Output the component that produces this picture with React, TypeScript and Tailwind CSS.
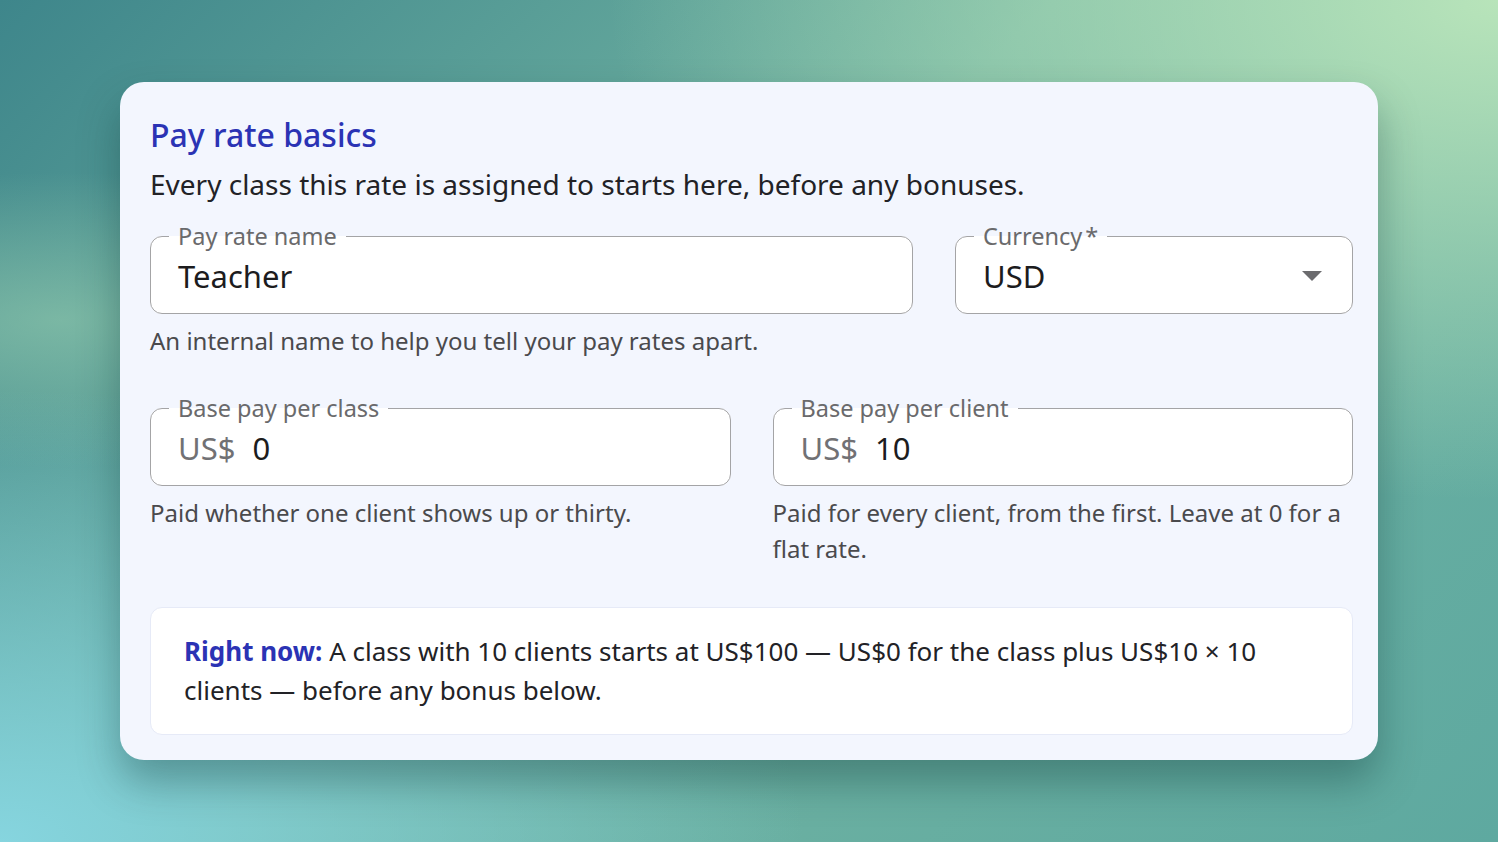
import { ReactNode } from 'react';

// ────────────────────────────────────────────
// Outlined field (notched label, MUI style)
// ────────────────────────────────────────────

function OutlinedField({
  label,
  required,
  children,
  className = '',
}: {
  label: string;
  required?: boolean;
  children: ReactNode;
  className?: string;
}) {
  return (
    <fieldset
      className={`min-w-0 rounded-[12px] border-[1.5px] border-[#a4a4a6] bg-white px-[27px] pb-[19px] ${className}`}
    >
      <legend className="-ml-[9px] px-[9px] text-[23.5px] leading-[23px] text-[#6a6a6c]">
        {label}
        {required && <span className="ml-[3px]">*</span>}
      </legend>
      <div className="mt-[10px] flex h-[36px] items-center text-[31px] leading-[36px] text-[#1c1c1e]">
        {children}
      </div>
    </fieldset>
  );
}

function Helper({ children }: { children: ReactNode }) {
  return <p className="mt-[9px] text-[24px] leading-[36px] text-[#4a4a4d]">{children}</p>;
}

// ────────────────────────────────────────────
// App root
// ────────────────────────────────────────────

export default function App() {
  return (
    <div
      className="flex h-[842px] w-full items-center justify-center overflow-hidden bg-[radial-gradient(ellipse_at_100%_0%,#b8e4ba_0%,rgba(184,228,186,0)_42%),radial-gradient(ellipse_at_0%_100%,#86d5df_0%,rgba(134,213,223,0)_38%),radial-gradient(ellipse_at_4%_38%,rgba(150,205,175,0.6)_0%,rgba(150,205,175,0)_20%),linear-gradient(135deg,#3e868b_0%,#72b4a2_45%,#5ea9a0_100%)]"
      style={{ fontFamily: '"Noto Sans", "Open Sans", sans-serif' }}
    >
      <div className="w-[1258px] rounded-[24px] bg-[#f3f6fe] pb-[25px] pl-[30px] pr-[25px] pt-[33px] shadow-[0_22px_40px_rgba(10,50,50,0.35)]">
        <h1 className="text-[32px] font-medium leading-[40px] text-[#2b33b4]">Pay rate basics</h1>
        <p className="mt-[11px] text-[28px] leading-[36px] text-[#222226]">
          Every class this rate is assigned to starts here, before any bonuses.
        </p>

        <div className="mt-[23px] flex gap-[42px]">
          <OutlinedField label="Pay rate name" className="flex-1">
            Teacher
          </OutlinedField>
          <OutlinedField label="Currency" required className="w-[398px] shrink-0">
            <span className="flex-1">USD</span>
            <svg width="20" height="10" viewBox="0 0 20 10" className="mr-[3px]">
              <path d="M0 0 L20 0 L10 10 Z" fill="#6b6b6e" />
            </svg>
          </OutlinedField>
        </div>
        <Helper>An internal name to help you tell your pay rates apart.</Helper>

        <div className="mt-[38px] grid grid-cols-2 gap-x-[42px]">
          <div>
            <OutlinedField label="Base pay per class">
              <span className="mr-[17px] text-[#717174]">US$</span>0
            </OutlinedField>
            <Helper>Paid whether one client shows up or thirty.</Helper>
          </div>
          <div>
            <OutlinedField label="Base pay per client">
              <span className="mr-[17px] text-[#717174]">US$</span>10
            </OutlinedField>
            <Helper>Paid for every client, from the first. Leave at 0 for a flat rate.</Helper>
          </div>
        </div>

        <div className="mt-[40px] rounded-[12px] border border-[#e6eaf7] bg-white px-[33px] py-[24px] text-[26px] leading-[39px] text-[#222226]">
          <span className="font-bold text-[#2b33b4]">Right now:</span> A class with 10 clients starts at US$100 — US$0
          for the class plus US$10 × 10 clients — before any bonus below.
        </div>
      </div>
    </div>
  );
}
